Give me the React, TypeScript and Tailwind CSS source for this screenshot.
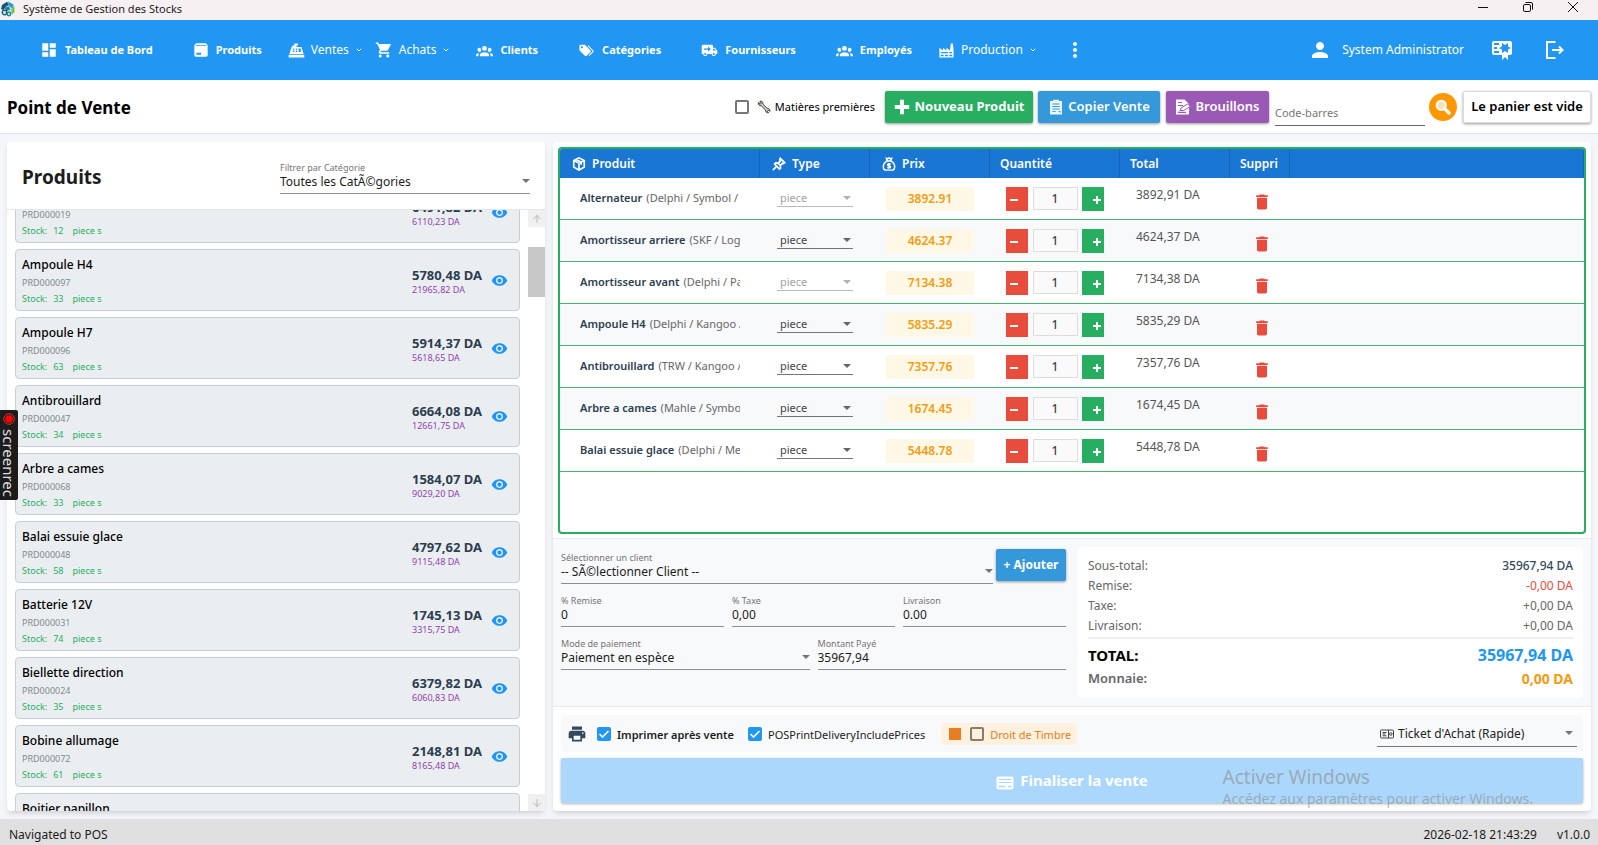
import React, { useState } from 'react';
import { MdDashboard, MdShoppingCart, MdMoreVert, MdPerson, MdPrint, MdDelete, MdVisibility } from 'react-icons/md';
import { ArrowDown, ArrowUp, ChevronDown } from 'lucide-react';

interface IconProps {
  className?: string;
}

interface Product {
  name: string;
  sku: string;
  stock: number;
  price: string;
  lot: string;
}

interface CartLine {
  name: string;
  detail: string;
  price: string;
  total: string;
  locked?: boolean;
}

const products: Product[] = [
  { name: 'Amortisseur avant', sku: 'PRD000019', stock: 12, price: '6491,82', lot: '6110,23' },
  { name: 'Ampoule H4', sku: 'PRD000097', stock: 33, price: '5780,48', lot: '21965,82' },
  { name: 'Ampoule H7', sku: 'PRD000096', stock: 63, price: '5914,37', lot: '5618,65' },
  { name: 'Antibrouillard', sku: 'PRD000047', stock: 34, price: '6664,08', lot: '12661,75' },
  { name: 'Arbre a cames', sku: 'PRD000068', stock: 33, price: '1584,07', lot: '9029,20' },
  { name: 'Balai essuie glace', sku: 'PRD000048', stock: 58, price: '4797,62', lot: '9115,48' },
  { name: 'Batterie 12V', sku: 'PRD000031', stock: 74, price: '1745,13', lot: '3315,75' },
  { name: 'Biellette direction', sku: 'PRD000024', stock: 35, price: '6379,82', lot: '6060,83' },
  { name: 'Bobine allumage', sku: 'PRD000072', stock: 61, price: '2148,81', lot: '8165,48' },
  { name: 'Boitier papillon', sku: 'PRD000055', stock: 27, price: '3120,40', lot: '5210,60' },
];

const initialCart: CartLine[] = [
  { name: 'Alternateur', detail: '(Delphi / Symbol / Symbol)', price: '3892.91', total: '3892,91 DA', locked: true },
  { name: 'Amortisseur arriere', detail: '(SKF / Logan)', price: '4624.37', total: '4624,37 DA' },
  { name: 'Amortisseur avant', detail: '(Delphi / Partner)', price: '7134.38', total: '7134,38 DA', locked: true },
  { name: 'Ampoule H4', detail: '(Delphi / Kangoo / Kangoo)', price: '5835.29', total: '5835,29 DA' },
  { name: 'Antibrouillard', detail: '(TRW / Kangoo / Kangoo)', price: '7357.76', total: '7357,76 DA' },
  { name: 'Arbre a cames', detail: '(Mahle / Symbol)', price: '1674.45', total: '1674,45 DA' },
  { name: 'Balai essuie glace', detail: '(Delphi / Megane)', price: '5448.78', total: '5448,78 DA' },
];

function Glyph({ d, className }: IconProps & { d: string }) {
  return (
    <svg viewBox="0 0 24 24" fill="currentColor" fillRule="evenodd" className={className} aria-hidden="true">
      <path d={d} />
    </svg>
  );
}

const GROUP =
  'M12,5.5A3.5,3.5 0 0,1 15.5,9A3.5,3.5 0 0,1 12,12.5A3.5,3.5 0 0,1 8.5,9A3.5,3.5 0 0,1 12,5.5M5,8C5.56,8 6.08,8.15 6.53,8.42C6.38,9.85 6.8,11.27 7.66,12.38C7.16,13.34 6.16,14 5,14A3,3 0 0,1 2,11A3,3 0 0,1 5,8M19,8A3,3 0 0,1 22,11A3,3 0 0,1 19,14C17.84,14 16.84,13.34 16.34,12.38C17.2,11.27 17.62,9.85 17.47,8.42C17.92,8.15 18.44,8 19,8M5.5,18.25C5.5,16.18 8.41,14.5 12,14.5C15.59,14.5 18.5,16.18 18.5,18.25V20H5.5V18.25M0,20V18.5C0,17.11 1.89,15.94 4.45,15.6C3.86,16.28 3.5,17.22 3.5,18.25V20H0M24,20H20.5V18.25C20.5,17.22 20.14,16.28 19.55,15.6C22.11,15.94 24,17.11 24,18.5V20Z';
const TAGS =
  'M5.5,9A1.5,1.5 0 0,0 7,7.5A1.5,1.5 0 0,0 5.5,6A1.5,1.5 0 0,0 4,7.5A1.5,1.5 0 0,0 5.5,9M17.41,11.58C17.77,11.94 18,12.44 18,13C18,13.55 17.78,14.05 17.41,14.41L12.41,19.41C12.05,19.77 11.55,20 11,20C10.45,20 9.95,19.78 9.58,19.41L2.59,12.42C2.22,12.05 2,11.55 2,11V6C2,4.89 2.89,4 4,4H9C9.55,4 10.05,4.22 10.41,4.58L17.41,11.58M13.54,5.71L14.54,4.71L21.41,11.58C21.78,11.94 22,12.45 22,13C22,13.55 21.78,14.05 21.42,14.41L16.04,19.79L15.04,18.79L20.75,13L13.54,5.71Z';
const FACTORY =
  'M4,18V20H8V18H4M4,14V16H14V14H4M10,18V20H14V18H10M16,14V16H20V14H16M16,18V20H20V18H16M2,22V8L7,12V8L12,12V8L17,12L18,2H21L22,12V22H2Z';
const CERTIFICATE =
  'M4,3C2.89,3 2,3.89 2,5V15A2,2 0 0,0 4,17H12V22L15,19L18,22V17H20A2,2 0 0,0 22,15V5A2,2 0 0,0 20,3H4M12,5L15,7L18,5V8.5L21,10L18,11.5V15L15,13L12,15V11.5L9,10L12,8.5V5M4,5H9V7H4V5M4,9H7V11H4V9M4,13H9V15H4V13Z';
const PACKAGE = 'M5,2H19L22,5V20A2,2 0 0,1 20,22H4A2,2 0 0,1 2,20V5L5,2M4,5V6H20V5H4M5,16V19H12V16H5Z';
const REGISTER =
  'M1,18H23V22H1V18M6,7V5H9V2H14V5H12V7H19L22,17H2L5,7H6M7,9V11H9V9H7M7,12V14H9V12H7M11,9V11H13V9H11M11,12V14H13V12H11M15,9V14H18V9H15Z';
const TRUCK =
  'M3,4H15A2,2 0 0,1 17,6V8H19.5L23,12V17H21A3,3 0 0,1 15,17H9A3,3 0 0,1 3,17H1V6A2,2 0 0,1 3,4M10,6.5V9H4V11H10V13.5L13.8,10L10,6.5M17,9.5V12H21.2L19,9.5H17M6,15.5A1.5,1.5 0 0,0 6,18.5A1.5,1.5 0 0,0 6,15.5M18,15.5A1.5,1.5 0 0,0 18,18.5A1.5,1.5 0 0,0 18,15.5Z';

function LogoIcon() {
  return (
    <svg viewBox="0 0 16 16" className="h-4 w-4" aria-hidden="true">
      <path d="M8 0.5l6 3.5v7.5l-6 4-6-4V4z" fill="#b9dfe6" />
      <path d="M2 4l5-3.3L9 4 6 5.5 3.5 9 1 8z" fill="#16537e" />
      <path d="M8 .5l5.500 3-1 4-3-2z" fill="#2a9fc4" />
      <path d="M5 6.500l4-1 1 3-4 2z" fill="#1c7f93" />
      <circle cx="4.500" cy="11.500" r="2.300" fill="none" stroke="#1d5b86" strokeWidth="1.300" />
      <circle cx="9" cy="13" r="1.800" fill="none" stroke="#1f8a7d" strokeWidth="1.300" />
      <path d="M11.500 8l3-3v6L12 13.500z" fill="#7dbb4c" />
    </svg>
  );
}

function LogoutIcon() {
  return (
    <svg viewBox="0 0 18 18" className="h-[18px] w-[18px]" fill="none" stroke="currentColor" strokeWidth="2" aria-hidden="true">
      <path d="M9.500 1H1v16h8.500M6 9h10.500M13 5.500L16.500 9 13 12.500" />
    </svg>
  );
}

function BoxIcon() {
  return (
    <svg viewBox="0 0 16 16" className="h-[14px] w-[14px]" fill="none" stroke="currentColor" strokeWidth="1.900" aria-hidden="true">
      <path d="M8 1l6 3v7.500L8 15l-6-3.500V4zM2 4l6 3 6-3M8 7v8M4.500 2.800l6 3v3" />
    </svg>
  );
}

function PinIcon() {
  return (
    <svg viewBox="0 0 16 16" className="h-[14px] w-[14px]" fill="none" stroke="currentColor" strokeWidth="2" aria-hidden="true">
      <path d="M9.500 1.500l5 5-1.500 1-1-.3-2.500 2.500.3 3-1.300 1L3 8l1-1.300 3 .3L9.500 4.500l-.6-1.600zM5.500 10.500L1 15M7 7l2.500 2.500" />
    </svg>
  );
}

function MoneyIcon() {
  return (
    <svg viewBox="0 0 16 16" className="h-[14px] w-[14px]" fill="none" stroke="currentColor" strokeWidth="1.700" aria-hidden="true">
      <path d="M6 4.500C2.500 6.500 1.500 9 1.500 11c0 3 1.500 4 3.500 4h6c2 0 3.500-1 3.500-4 0-2-1-4.500-4.500-6.500M6 4.500L5 1.500l1.700.5L8 1l1.300 1 1.700-.5-1 3z" />
      <path d="M10 8.300C8.500 7.300 6.200 7.700 6.300 9c.1 1.300 3.500.9 3.500 2.300 0 1.300-2.300 1.500-3.800.5M8 6.800v6" />
    </svg>
  );
}

function WrenchIcon() {
  return (
    <svg viewBox="0 0 14 14" className="h-[14px] w-[14px]" aria-hidden="true">
      <path
        d="M1.500 2.500l1.800 1.600 1-1L2.800 1.300C4.500.6 6.300 2 5.900 4.100l4.300 4.300c1.800-.3 3.200 1.300 2.600 3l-1.300-1.300-1.200 1.200 1.300 1.400c-1.700.6-3.300-.8-3-2.600L4.300 5.800C2.400 6.200.8 4.300 1.500 2.500z"
        fill="#d9cfc0"
        stroke="#2b2b2b"
        strokeWidth="0.9"
      />
    </svg>
  );
}

function PlusIcon() {
  return (
    <svg viewBox="0 0 16 16" className="h-4 w-4" fill="currentColor" aria-hidden="true">
      <path d="M6 .8h4V6h5.200v4H10v5.200H6V10H.8V6H6z" />
    </svg>
  );
}

function ClipboardIcon() {
  return (
    <svg viewBox="0 0 16 16" className="h-4 w-4" aria-hidden="true">
      <path d="M2 2h3V.8h6V2h3v13.500H2z" fill="#e8f6ff" />
      <path d="M4.500 5h7M4.500 7.500h7M4.500 10h7M4.500 12.500h3" stroke="#3498db" strokeWidth="1.200" />
      <path d="M10 12h2.500v2z" fill="#3498db" />
    </svg>
  );
}

function DraftIcon() {
  return (
    <svg viewBox="0 0 16 16" className="h-4 w-4" aria-hidden="true">
      <path d="M1 .5h8.500L14 5v10.500H1z" fill="#fff" />
      <path d="M3 3.500h4M3 6.500h5M3 13.300h8" stroke="#9b59b6" strokeWidth="1.200" />
      <path d="M5 11.500l1-2.500L12.500 5l3 2.500-7 4z" fill="#fff" stroke="#9b59b6" strokeWidth="1" />
    </svg>
  );
}

function SearchIcon() {
  return (
    <svg viewBox="0 0 16 16" className="h-4 w-4" aria-hidden="true">
      <path d="M9.500 9.500l4.500 4.500" stroke="#fff" strokeWidth="3.400" strokeLinecap="round" />
      <circle cx="6.300" cy="6.300" r="4.600" fill="#ffe3b8" stroke="#fff" strokeWidth="2" />
    </svg>
  );
}

function CardIcon() {
  return (
    <svg viewBox="0 0 18 14" className="mt-1 h-[14px] w-[18px]" aria-hidden="true">
      <rect x="0.500" y="0.500" width="17" height="13" rx="2" fill="#fff" />
      <path d="M2.500 3.500h13M2.500 6.500h13" stroke="#aad7fb" strokeWidth="1" />
      <path d="M2.500 10.500h7M12 10.500h3.500" stroke="#aad7fb" strokeWidth="1.500" />
    </svg>
  );
}

function TicketIcon() {
  return (
    <svg viewBox="0 0 14 10" className="h-[10px] w-[14px]" fill="none" stroke="#444" strokeWidth="1" aria-hidden="true">
      <rect x="0.500" y="1" width="13" height="8" rx="1" />
      <path d="M2.500 3.500h4M2.500 5h3M2.500 6.800h4M8.500 1v8" />
      <circle cx="10.800" cy="5" r="1.300" />
    </svg>
  );
}

function Caret({ className }: IconProps) {
  return (
    <svg viewBox="0 0 8 4" className={`pointer-events-none absolute h-1 w-2 ${className ?? ''}`} fill="currentColor" aria-hidden="true">
      <path d="M0 0h8L4 4z" />
    </svg>
  );
}

interface NavItemProps {
  icon: React.ReactNode;
  label: string;
  menu?: boolean;
}

function NavItem({ icon, label, menu }: NavItemProps) {
  if (menu) {
    return (
      <button className="flex items-center px-[6px] text-xs">
        {icon}
        <span className="ml-[6px]">{label}</span>
        <ChevronDown className="ml-[6px] h-2 w-2" strokeWidth={3} />
      </button>
    );
  }
  return (
    <a href="#" className="flex items-center gap-[7px] px-5 text-[11px] font-bold">
      {icon}
      {label}
    </a>
  );
}

interface FieldProps {
  id: string;
  label: string;
  value: string;
  select?: boolean;
}

function Field({ id, label, value, select }: FieldProps) {
  return (
    <div className="relative flex min-w-0 flex-1 flex-col border-b border-[#8d8f92] pb-[3px]">
      <label htmlFor={id} className="text-[9px] leading-3 text-[#757575]">
        {label}
      </label>
      {select ? (
        <>
          <select id={id} className="h-4 w-full appearance-none bg-transparent text-xs leading-4 outline-none">
            <option>{value}</option>
          </select>
          <Caret className="right-0 bottom-[10px] text-[#757575]" />
        </>
      ) : (
        <input id={id} defaultValue={value} className="h-4 w-full bg-transparent text-xs leading-4 outline-none" />
      )}
    </div>
  );
}

function ProductCard({ product }: { product: Product }) {
  return (
    <li className="flex h-[62px] shrink-0 items-center rounded border border-[#c8ced2] bg-[#ebeef1] pr-[11px] pl-[6px]">
      <div className="flex-1 pt-[2px]">
        <p className="text-xs leading-5 font-medium text-black">{product.name}</p>
        <p className="text-[9px] leading-4 text-[#7f8c8d]">{product.sku}</p>
        <p className="flex text-[9px] leading-4 text-[#27ae60]">
          <span>Stock:</span>
          <span className="ml-[6px]">{product.stock}</span>
          <span className="ml-[9px]">piece s</span>
        </p>
      </div>
      <div className="w-[79px] pt-[3px]">
        <p className="text-[13px] leading-[17px] font-bold text-[#2c3e50]">{product.price} DA</p>
        <p className="text-[9px] leading-3 text-[#8e44ad]">{product.lot} DA</p>
      </div>
      <button aria-label={`Voir ${product.name}`} className="text-[#2196f3]">
        <MdVisibility className="h-[17px] w-[17px]" />
      </button>
    </li>
  );
}

function ProductPanel() {
  return (
    <section className="flex min-w-0 flex-[538] flex-col overflow-hidden rounded bg-white shadow-md">
      <div className="flex h-[68px] shrink-0 items-center border-b border-[#e4e6e8] px-[15px] pt-1">
        <h2 className="flex-1 text-[19px] font-bold">Produits</h2>
        <div className="flex w-[250px]">
          <Field id="category" label="Filtrer par Catégorie" value="Toutes les CatÃ©gories" select />
        </div>
      </div>
      <div className="flex min-h-0 flex-1">
        <div className="min-w-0 flex-1 overflow-hidden px-2">
          <ul className="-mt-[29px] flex flex-col gap-[6px]">
            {products.map((p) => (
              <ProductCard key={p.sku} product={p} />
            ))}
          </ul>
        </div>
        <div className="flex w-[17px] flex-col text-[#b8b8b8]">
          <button aria-label="Monter" className="flex h-[17px] items-center justify-center bg-[#f0f0f0]">
            <ArrowUp className="h-3 w-3" />
          </button>
          <div className="mt-5 h-[50px] bg-[#c8c8c8]" />
          <button aria-label="Descendre" className="mt-auto flex h-[17px] items-center justify-center bg-[#f0f0f0]">
            <ArrowDown className="h-3 w-3" />
          </button>
        </div>
      </div>
    </section>
  );
}

function CartRow({ line, index, onRemove }: { line: CartLine; index: number; onRemove: () => void }) {
  const [qty, setQty] = useState(1);

  return (
    <tr className={`h-[42px] ${index % 2 ? 'bg-[#f8f9fb]' : 'bg-white'} [&>td]:border-b [&>td]:border-[#45b678]`}>
      <td className="px-5">
        <div className="overflow-hidden text-[11px] whitespace-nowrap">
          <span className="font-semibold text-[#2c3e50]">{line.name}</span>
          <span className="ml-1 text-[#666]">{line.detail}</span>
        </div>
      </td>
      <td className="px-[17px]">
        <div className={`relative border-b border-[#757575] ${line.locked ? 'opacity-50' : ''}`}>
          <select
            aria-label="Type"
            disabled={line.locked}
            className="block h-4 w-full appearance-none px-[3px] text-[11px] leading-4 text-[#444] outline-none"
          >
            <option>piece</option>
          </select>
          <Caret className="right-[2px] bottom-[6px] text-[#666]" />
        </div>
      </td>
      <td className="px-4">
        <input
          aria-label="Prix"
          defaultValue={line.price}
          className="block h-6 w-full bg-[#fff8e6] text-center text-xs font-semibold text-[#f39c12] outline-none"
        />
      </td>
      <td className="px-4">
        <div className="flex items-center justify-between">
          <button
            aria-label="Diminuer"
            onClick={() => setQty(Math.max(1, qty - 1))}
            className="flex h-6 w-[22px] items-center bg-[#e74c3c] pt-[2px] pl-1"
          >
            <span className="h-[2px] w-2 bg-white" />
          </button>
          <input
            aria-label="Quantité"
            value={qty}
            onChange={(e) => setQty(Number(e.target.value) || 1)}
            className="h-[23px] w-[45px] border border-[#ddd] bg-[#fafafa] text-center text-xs font-medium text-[#444] outline-none"
          />
          <button
            aria-label="Augmenter"
            onClick={() => setQty(qty + 1)}
            className="flex h-6 w-[22px] items-center justify-end bg-[#27ae60] pt-[2px] pr-[3px] text-white"
          >
            <svg viewBox="0 0 8 8" className="h-2 w-2" fill="currentColor" aria-hidden="true">
              <path d="M3 0h2v3h3v2H5v3H3V5H0V3h3z" />
            </svg>
          </button>
        </div>
      </td>
      <td className="px-4 pb-2 text-xs text-[#555]">{line.total}</td>
      <td className="pt-[6px] pl-[3px] text-center">
        <button aria-label={`Supprimer ${line.name}`} onClick={onRemove} className="block w-full text-[#e74c3c]">
          <MdDelete className="mx-auto h-5 w-5" />
        </button>
      </td>
      <td />
    </tr>
  );
}

function CartTable() {
  const [lines, setLines] = useState(initialCart);

  return (
    <div className="m-[5px] mb-1 min-h-0 flex-1 overflow-hidden rounded border-2 border-[#27ae60]">
      <table className="w-full table-fixed border-separate border-spacing-0">
        <thead>
          <tr className="h-[29px] bg-[#1976d2] text-left text-xs text-white [&>th]:border-r [&>th]:border-[#1565c0] [&>th]:pt-px [&>th]:font-semibold">
            <th className="w-[200px] px-3">
              <span className="flex items-center gap-[6px]">
                <BoxIcon /> Produit
              </span>
            </th>
            <th className="w-[110px] px-3">
              <span className="flex items-center gap-[6px]">
                <PinIcon /> Type
              </span>
            </th>
            <th className="w-[120px] px-3">
              <span className="flex items-center gap-[6px]">
                <MoneyIcon /> Prix
              </span>
            </th>
            <th className="w-[130px] px-[10px]">Quantité</th>
            <th className="w-[110px] px-[10px]">Total</th>
            <th className="w-[60px] px-[10px]">Suppri</th>
            <th />
          </tr>
        </thead>
        <tbody>
          {lines.map((line, i) => (
            <CartRow key={line.name} line={line} index={i} onRemove={() => setLines(lines.filter((l) => l !== line))} />
          ))}
        </tbody>
      </table>
    </div>
  );
}

function Summary() {
  return (
    <div className="flex h-[151px] min-w-0 flex-col rounded bg-white px-[10px] pt-[9px] text-[#666]">
      <div className="flex h-5 items-center justify-between text-xs">
        <span>Sous-total:</span>
        <span className="font-medium text-[#34495e]">35967,94 DA</span>
      </div>
      <div className="flex h-5 items-center justify-between text-xs">
        <span>Remise:</span>
        <span className="text-[#e74c3c]">-0,00 DA</span>
      </div>
      <div className="flex h-5 items-center justify-between text-xs">
        <span>Taxe:</span>
        <span>+0,00 DA</span>
      </div>
      <div className="flex h-5 items-center justify-between text-xs">
        <span>Livraison:</span>
        <span>+0,00 DA</span>
      </div>
      <div className="mt-px border-t-2 border-[#f0f0f0]" />
      <div className="mt-1 flex h-6 items-center justify-between font-bold">
        <span className="text-[15px] text-black">TOTAL:</span>
        <span className="text-base text-[#2196f3]">35967,94 DA</span>
      </div>
      <div className="flex h-6 items-center justify-between">
        <span className="text-[13px] font-semibold">Monnaie:</span>
        <span className="text-sm font-bold text-[#f39c12]">0,00 DA</span>
      </div>
    </div>
  );
}

interface CheckProps {
  label: string;
  checked?: boolean;
  className?: string;
  boxClass?: string;
}

function Check({ label, checked, className, boxClass }: CheckProps) {
  return (
    <label className={`flex items-center gap-[6px] text-[11px] ${className ?? ''}`}>
      <span className="relative flex">
        <input
          type="checkbox"
          defaultChecked={checked}
          className={`peer h-[14px] w-[14px] appearance-none rounded-xs border-2 checked:border-[#2196f3] checked:bg-[#2196f3] ${boxClass ?? 'border-[#777]'}`}
        />
        <svg
          viewBox="0 0 14 14"
          className="pointer-events-none absolute inset-0 hidden h-[14px] w-[14px] peer-checked:block"
          fill="none"
          stroke="#fff"
          strokeWidth="1.600"
          aria-hidden="true"
        >
          <path d="M2.500 7l3 3 6-6" />
        </svg>
      </span>
      <span className="pt-[3px]">{label}</span>
    </label>
  );
}

function SalePanel() {
  return (
    <section className="flex min-w-0 flex-[1038] flex-col rounded bg-white shadow-md">
      <CartTable />
      <div className="grid grid-cols-2 gap-3 border-t border-b border-[#e8eaec] bg-[#f8f9fb] p-2">
        <div className="flex min-w-0 flex-col gap-[11px] pt-[5px]">
          <div className="flex gap-[3px]">
            <Field id="client" label="Sélectionner un client" value="-- SÃ©lectionner Client --" select />
            <button className="-mt-[3px] h-8 w-[70px] rounded-xs bg-[#3498db] text-xs font-bold text-white shadow-[0_1px_3px_rgba(0,0,0,0.4)]">
              + Ajouter
            </button>
          </div>
          <div className="flex gap-2">
            <Field id="discount" label="% Remise" value="0" />
            <Field id="tax" label="% Taxe" value="0,00" />
            <Field id="delivery" label="Livraison" value="0.00" />
          </div>
          <div className="flex gap-2">
            <Field id="mode" label="Mode de paiement" value="Paiement en espèce" select />
            <Field id="paid" label="Montant Payé" value="35967,94" />
          </div>
        </div>
        <Summary />
      </div>
      <div className="flex flex-col gap-[6px] p-2">
        <div className="flex h-[37px] items-center rounded bg-[#f8f9fb] px-[6px]">
          <MdPrint className="h-5 w-5 text-[#34495e]" />
          <Check label="Imprimer après vente" checked className="ml-[10px] font-semibold" />
          <Check label="POSPrintDeliveryIncludePrices" checked className="ml-[14px]" />
          <div className="ml-4 flex h-[22px] items-center rounded bg-[#fff1df] pr-[6px] pl-2">
            <span className="mr-[9px] h-3 w-3 bg-[#e67e22]" />
            <Check label="Droit de Timbre" className="text-[#e67e22]" boxClass="border-[#8c7b68]" />
          </div>
          <div className="relative ml-auto flex w-[200px] items-center gap-1 border-b border-[#757575] pt-1 pb-[2px] pl-[3px]">
            <TicketIcon />
            <select aria-label="Format d'impression" className="h-5 flex-1 appearance-none text-xs text-[#222] outline-none">
              <option>Ticket d'Achat (Rapide)</option>
            </select>
            <Caret className="right-1 bottom-[11px] text-[#757575]" />
          </div>
        </div>
        <button className="flex h-[45px] items-center justify-center gap-[6px] rounded-xs bg-[#aad7fb] text-[15px] font-bold text-white shadow-[0_1px_3px_rgba(0,0,0,0.3)]">
          <CardIcon />
          Finaliser la vente
        </button>
      </div>
    </section>
  );
}

export default function App() {
  return (
    <div className="relative flex h-screen flex-col overflow-hidden bg-[#f5f6fa] font-['Noto_Sans','Segoe_UI',sans-serif] text-[#1c1c1c]">
      <header className="flex h-5 shrink-0 items-center bg-[#f6f0f3] pr-5 pb-[2px] text-[11px] text-[#222]">
        <LogoIcon />
        <span className="ml-[7px] leading-4">Système de Gestion des Stocks</span>
        <div className="ml-auto flex gap-[35px] pb-1">
          <button aria-label="Réduire">
            <svg viewBox="0 0 10 10" className="h-[10px] w-[10px]" stroke="#111" aria-hidden="true">
              <path d="M0 5.500h10" />
            </svg>
          </button>
          <button aria-label="Restaurer">
            <svg viewBox="0 0 10 10" className="h-[10px] w-[10px]" fill="none" stroke="#111" aria-hidden="true">
              <rect x="0.500" y="2.500" width="7" height="7" rx="1.500" />
              <path d="M2.500.5H8a1.500 1.500 0 0 1 1.500 1.500v5.500" />
            </svg>
          </button>
          <button aria-label="Fermer">
            <svg viewBox="0 0 10 10" className="h-[10px] w-[10px]" stroke="#111" aria-hidden="true">
              <path d="M0 0l10 10M10 0L0 10" />
            </svg>
          </button>
        </div>
      </header>

      <nav className="flex h-[60px] shrink-0 items-stretch bg-[#2196f3] pr-[34px] pl-5 text-white">
        <NavItem icon={<MdDashboard className="h-[18px] w-[18px]" />} label="Tableau de Bord" />
        <NavItem icon={<Glyph d={PACKAGE} className="h-4 w-4" />} label="Produits" />
        <NavItem icon={<Glyph d={REGISTER} className="h-[17px] w-[17px]" />} label="Ventes" menu />
        <NavItem icon={<MdShoppingCart className="h-[18px] w-[18px]" />} label="Achats" menu />
        <NavItem icon={<Glyph d={GROUP} className="h-[17px] w-[17px]" />} label="Clients" />
        <NavItem icon={<Glyph d={TAGS} className="h-[17px] w-[17px]" />} label="Catégories" />
        <NavItem icon={<Glyph d={TRUCK} className="h-[17px] w-[17px]" />} label="Fournisseurs" />
        <NavItem icon={<Glyph d={GROUP} className="h-[17px] w-[17px]" />} label="Employés" />
        <NavItem icon={<Glyph d={FACTORY} className="h-[17px] w-[17px]" />} label="Production" menu />
        <button aria-label="Plus" className="ml-5">
          <MdMoreVert className="h-6 w-6" />
        </button>
        <div className="ml-auto flex items-center text-xs">
          <MdPerson className="h-6 w-6" />
          <span className="ml-[10px]">System Administrator</span>
          <button aria-label="Licence" className="ml-[26px]">
            <Glyph d={CERTIFICATE} className="h-6 w-6" />
          </button>
          <button aria-label="Déconnexion" className="ml-8">
            <LogoutIcon />
          </button>
        </div>
      </nav>

      <div className="flex h-[54px] shrink-0 items-center border-b border-[#e0e2e5] bg-white px-[7px]">
        <h1 className="flex-1 pt-[2px] text-[17px] font-bold text-black">Point de Vente</h1>
        <label className="flex items-center text-[11px] text-black">
          <input type="checkbox" className="mr-2 h-[14px] w-[14px] appearance-none rounded-xs border-2 border-[#777]" />
          <WrenchIcon />
          <span className="ml-1 pt-[2px]">Matières premières</span>
        </label>
        <button className="ml-[10px] flex h-8 w-[148px] items-center justify-center gap-[5px] rounded-xs bg-[#27ae60] text-[13px] font-bold text-white shadow-[0_1px_3px_rgba(0,0,0,0.4)]">
          <PlusIcon />
          Nouveau Produit
        </button>
        <button className="ml-[5px] flex h-8 w-[122px] items-center justify-center gap-1 rounded-xs bg-[#3498db] text-[13px] font-semibold text-white shadow-[0_1px_3px_rgba(0,0,0,0.4)]">
          <ClipboardIcon />
          Copier Vente
        </button>
        <button className="ml-[6px] flex h-8 w-[103px] items-center justify-center gap-1 rounded-xs bg-[#9b59b6] text-[13px] font-semibold text-white shadow-[0_1px_3px_rgba(0,0,0,0.4)]">
          <DraftIcon />
          Brouillons
        </button>
        <input
          aria-label="Code-barres"
          placeholder="Code-barres"
          className="mt-1 ml-[6px] h-[34px] w-[150px] border-b border-[#666] pt-2 text-[11px] outline-none placeholder:text-[#777]"
        />
        <button aria-label="Rechercher" className="ml-1 flex h-7 w-7 items-center justify-center rounded-full bg-[#ff9800]">
          <SearchIcon />
        </button>
        <button className="ml-[6px] h-8 w-32 rounded-xs border border-[#ddd] bg-white text-[13px] font-semibold text-black shadow-[0_1px_3px_rgba(0,0,0,0.4)]">
          Le panier est vide
        </button>
      </div>

      <main className="flex min-h-0 flex-1 gap-2 px-[7px] py-2">
        <ProductPanel />
        <SalePanel />
      </main>

      <footer className="flex h-[26px] shrink-0 items-center bg-[#e0e0e0] pt-[5px] pr-2 pl-[9px] text-xs">
        <span>Navigated to POS</span>
        <span className="ml-auto">2026-02-18 21:43:29</span>
        <span className="ml-5">v1.0.0</span>
      </footer>

      <div className="absolute top-[410px] left-0 flex h-[90px] w-[18px] flex-col items-center rounded-r-xs bg-[#1c1c1c] pt-[3px]">
        <svg viewBox="0 0 12 12" className="h-3 w-3 shrink-0" aria-hidden="true">
          <circle cx="6" cy="6" r="5.300" fill="none" stroke="#f33" strokeWidth="0.800" />
          <circle cx="6" cy="6" r="3.800" fill="#f00" />
        </svg>
        <span className="mt-1 text-[15px] leading-4 text-[#ddd] [writing-mode:vertical-rl]">screenrec</span>
      </div>

      <div className="pointer-events-none absolute right-[65px] bottom-9 text-[#8c8c8c]/60">
        <p className="text-[19px] leading-6">Activer Windows</p>
        <p className="text-sm leading-5">Accédez aux paramètres pour activer Windows.</p>
      </div>
    </div>
  );
}
